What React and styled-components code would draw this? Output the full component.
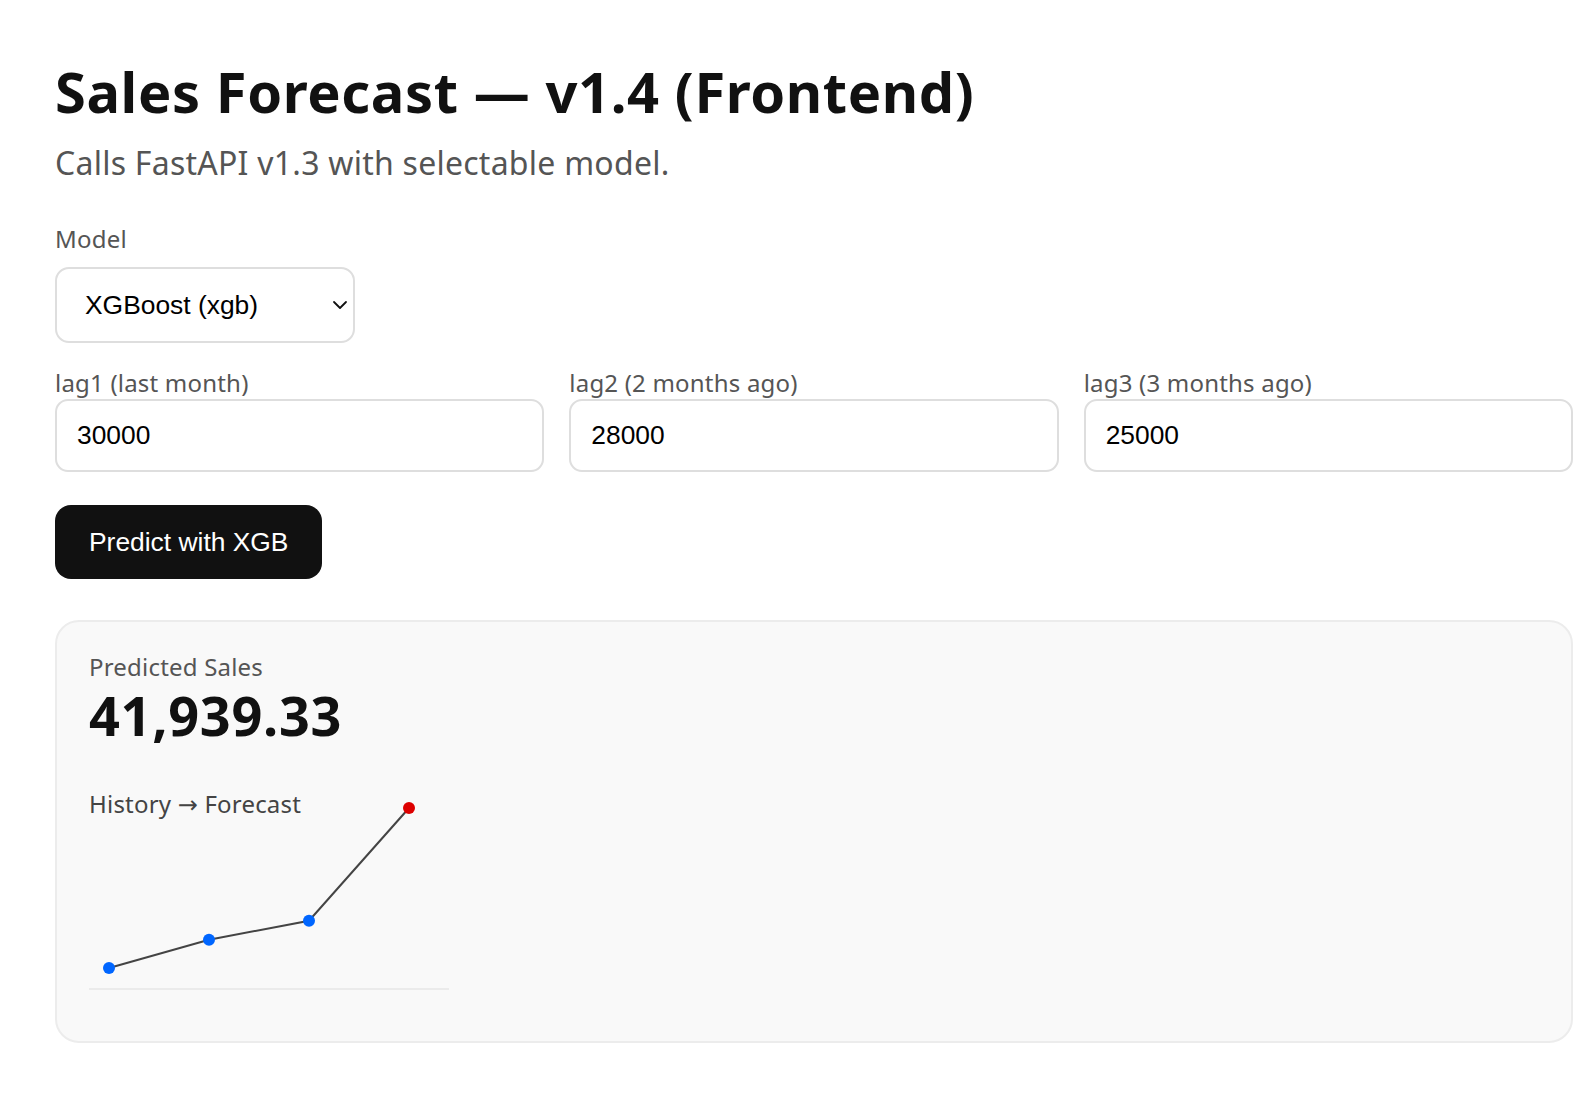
import React, { useState } from 'react';
import styled, { createGlobalStyle } from 'styled-components';
import { ChevronDown } from 'lucide-react';

const GlobalStyle = createGlobalStyle`
  html, body {
    margin: 0;
    padding: 0;
    background: #ffffff;
  }
  body {
    font-family: 'Noto Sans', 'Open Sans', sans-serif;
    color: #111;
  }
`;

const Page = styled.main`
  padding: 59px 15px 40px 55px;
`;

const Title = styled.h1`
  margin: 0;
  font-size: 56px;
  line-height: 64px;
  font-weight: 700;
  letter-spacing: 0.6px;
  color: #111;
`;

const Subtitle = styled.p`
  margin: 20px 0 40px;
  font-size: 32px;
  line-height: 40px;
  letter-spacing: 0.25px;
  color: #555;
`;

const Label = styled.label`
  display: block;
  font-size: 24px;
  line-height: 32px;
  letter-spacing: 0.2px;
  color: #555;
  margin-bottom: ${(p) => (p.$tight ? '0' : '12px')};
`;

const SelectWrap = styled.div`
  position: relative;
  width: 300px;
`;

const Select = styled.select`
  appearance: none;
  width: 100%;
  height: 76px;
  padding: 0 40px 0 28px;
  border: 2px solid #dedede;
  border-radius: 14px;
  background: #fff;
  font-family: 'Liberation Sans', Arial, sans-serif;
  font-size: 26.4px;
  color: #000;
  outline: none;
`;

const Chevron = styled(ChevronDown)`
  position: absolute;
  right: 3px;
  top: 50%;
  transform: translateY(-50%);
  pointer-events: none;
  color: #111;
`;

const LagGrid = styled.div`
  display: grid;
  grid-template-columns: repeat(3, 1fr);
  gap: 25px;
  margin-top: 24px;
`;

const Field = styled.div`
  display: flex;
  flex-direction: column;
`;

const Input = styled.input`
  box-sizing: border-box;
  width: 100%;
  height: 73px;
  padding: 0 20px;
  border: 2px solid #dedede;
  border-radius: 13px;
  font-family: 'Liberation Sans', Arial, sans-serif;
  font-size: 26.4px;
  color: #000;
  outline: none;
`;

const PredictButton = styled.button`
  display: block;
  margin-top: 33px;
  height: 74px;
  padding: 0 34px;
  border: none;
  border-radius: 16px;
  background: #111;
  color: #fff;
  font-family: 'Liberation Sans', Arial, sans-serif;
  font-size: 26.4px;
  cursor: pointer;
`;

const ResultCard = styled.section`
  margin-top: 41px;
  padding: 29px 32px 53px;
  border: 2px solid #ececec;
  border-radius: 24px;
  background: #f9f9f9;
`;

const ResultLabel = styled.div`
  font-size: 24px;
  line-height: 32px;
  letter-spacing: 0.2px;
  color: #555;
`;

const ResultValue = styled.div`
  font-size: 54px;
  line-height: 64px;
  font-weight: 700;
  letter-spacing: 0.7px;
  color: #111;
`;

const ChartSvg = styled.svg`
  display: block;
  margin-top: 41px;
  overflow: visible;
`;

const Caption = styled.text`
  font-family: 'Noto Sans', 'Open Sans', sans-serif;
  font-size: 24px;
  letter-spacing: 0.2px;
  fill: #444;
`;

const Arrow = styled.tspan`
  font-family: 'DejaVu Sans', sans-serif;
  font-size: 24px;
`;

const MODELS = [
  { value: 'xgb', label: 'XGBoost (xgb)' },
  { value: 'rf', label: 'Random Forest (rf)' },
  { value: 'lr', label: 'Linear Regression (lr)' },
];

function Sparkline({ history, forecast }) {
  const W = 360;
  const H = 200;
  const pad = 20;
  const values = [...history, forecast];
  const min = Math.min(...values);
  const max = Math.max(...values);
  const pts = values.map((v, i) => ({
    x: pad + i * 100,
    y: pad + ((max - v) / (max - min || 1)) * (H - 2 * pad),
  }));
  const d = pts.map((p, i) => `${i ? 'L' : 'M'}${p.x} ${p.y}`).join(' ');

  return (
    <ChartSvg width={W} height={H} viewBox={`0 0 ${W} ${H}`}>
      <Caption x="0" y="25">
        History <Arrow>→</Arrow> Forecast
      </Caption>
      <line x1="0" y1={H + 1} x2={W} y2={H + 1} stroke="#ebebeb" strokeWidth="2" />
      <path d={d} fill="none" stroke="#444" strokeWidth="2" />
      {pts.map((p, i) => (
        <circle
          key={i}
          cx={p.x}
          cy={p.y}
          r="6"
          fill={i === pts.length - 1 ? '#dd0000' : '#0066ff'}
        />
      ))}
    </ChartSvg>
  );
}

export default function App() {
  const [model, setModel] = useState('xgb');
  const [lags, setLags] = useState({ lag1: '30000', lag2: '28000', lag3: '25000' });
  const prediction = 41939.33;

  const setLag = (key) => (e) => setLags({ ...lags, [key]: e.target.value });

  return (
    <>
      <GlobalStyle />
      <Page>
        <Title>Sales Forecast — v1.4 (Frontend)</Title>
        <Subtitle>Calls FastAPI v1.3 with selectable model.</Subtitle>

        <Label htmlFor="model">Model</Label>
        <SelectWrap>
          <Select id="model" value={model} onChange={(e) => setModel(e.target.value)}>
            {MODELS.map((m) => (
              <option key={m.value} value={m.value}>{m.label}</option>
            ))}
          </Select>
          <Chevron size={24} strokeWidth={1.8} />
        </SelectWrap>

        <LagGrid>
          <Field>
            <Label $tight htmlFor="lag1">lag1 (last month)</Label>
            <Input id="lag1" value={lags.lag1} onChange={setLag('lag1')} />
          </Field>
          <Field>
            <Label $tight htmlFor="lag2">lag2 (2 months ago)</Label>
            <Input id="lag2" value={lags.lag2} onChange={setLag('lag2')} />
          </Field>
          <Field>
            <Label $tight htmlFor="lag3">lag3 (3 months ago)</Label>
            <Input id="lag3" value={lags.lag3} onChange={setLag('lag3')} />
          </Field>
        </LagGrid>

        <PredictButton>Predict with {model.toUpperCase()}</PredictButton>

        <ResultCard>
          <ResultLabel>Predicted Sales</ResultLabel>
          <ResultValue>
            {prediction.toLocaleString('en-US', { minimumFractionDigits: 2, maximumFractionDigits: 2 })}
          </ResultValue>
          <Sparkline
            history={[Number(lags.lag3), Number(lags.lag2), Number(lags.lag1)]}
            forecast={prediction}
          />
        </ResultCard>
      </Page>
    </>
  );
}
